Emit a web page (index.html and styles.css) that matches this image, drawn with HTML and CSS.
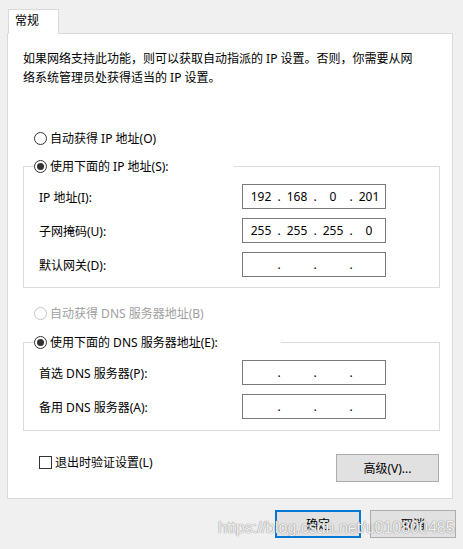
FILE: index.html
```html
<!DOCTYPE html>
<html lang="zh-CN">
<head>
<meta charset="utf-8">
<title>Internet 协议版本 4 (TCP/IPv4) 属性</title>
<link rel="stylesheet" href="styles.css">
</head>
<body>
<div class="dialog">
  <div class="tabs">
    <div class="tab">常规</div>
  </div>
  <div class="panel">
    <p class="desc">如果网络支持此功能，则可以获取自动指派的 IP 设置。否则，你需要从网<br>络系统管理员处获得适当的 IP 设置。</p>

    <div class="radio radio-first"><span class="circle"></span><span>自动获得 IP 地址(O)</span></div>

    <fieldset class="group group-ip">
      <legend class="legend legend-ip"><span class="radio"><span class="circle checked"></span><span>使用下面的 IP 地址(S):</span></span></legend>
      <div class="rows">
        <div class="row">
          <span class="label">IP 地址(I):</span>
          <div class="ipfield"><span class="seg">192</span><span class="dot">.</span><span class="seg">168</span><span class="dot">.</span><span class="seg">0</span><span class="dot">.</span><span class="seg">201</span></div>
        </div>
        <div class="row">
          <span class="label">子网掩码(U):</span>
          <div class="ipfield"><span class="seg">255</span><span class="dot">.</span><span class="seg">255</span><span class="dot">.</span><span class="seg">255</span><span class="dot">.</span><span class="seg">0</span></div>
        </div>
        <div class="row">
          <span class="label">默认网关(D):</span>
          <div class="ipfield"><span class="seg"></span><span class="dot">.</span><span class="seg"></span><span class="dot">.</span><span class="seg"></span><span class="dot">.</span><span class="seg"></span></div>
        </div>
      </div>
    </fieldset>

    <div class="radio radio-dns disabled"><span class="circle"></span><span>自动获得 DNS 服务器地址(B)</span></div>

    <fieldset class="group group-dns">
      <legend class="legend legend-dns"><span class="radio"><span class="circle checked"></span><span>使用下面的 DNS 服务器地址(E):</span></span></legend>
      <div class="rows rows-dns">
        <div class="row">
          <span class="label">首选 DNS 服务器(P):</span>
          <div class="ipfield"><span class="seg"></span><span class="dot">.</span><span class="seg"></span><span class="dot">.</span><span class="seg"></span><span class="dot">.</span><span class="seg"></span></div>
        </div>
        <div class="row">
          <span class="label">备用 DNS 服务器(A):</span>
          <div class="ipfield"><span class="seg"></span><span class="dot">.</span><span class="seg"></span><span class="dot">.</span><span class="seg"></span><span class="dot">.</span><span class="seg"></span></div>
        </div>
      </div>
    </fieldset>

    <div class="bottom">
      <div class="check"><span class="box"></span><span>退出时验证设置(L)</span></div>
      <button class="btn btn-adv">高级(V)...</button>
    </div>
  </div>
  <div class="footer">
    <button class="btn btn-main btn-default">确定</button>
    <button class="btn btn-main">取消</button>
  </div>
  <div class="watermark">https://blog.csdn.net/u010800485</div>
</div>
</body>
</html>
```

FILE: styles.css
```css
* { box-sizing: border-box; }

html, body {
  margin: 0;
  padding: 0;
  background: #f0f0f0;
}

body {
  width: 463px;
  height: 549px;
  overflow: hidden;
  font-family: "Noto Sans", "Noto Sans CJK SC", sans-serif;
  font-size: 12px;
  color: #000;
}

.dialog {
  position: relative;
  width: 463px;
  height: 549px;
  padding-top: 9px;
}

.tabs {
  display: flex;
  padding-left: 8px;
}

.tab {
  position: relative;
  z-index: 1;
  width: 51px;
  height: 25px;
  margin-bottom: -1px;
  padding-left: 6px;
  line-height: 22px;
  background: #fff;
  border: 1px solid #d9d9d9;
  border-bottom: none;
}

.panel {
  margin: 0 10px 0 7px;
  background: #fff;
  border: 1px solid #d9d9d9;
  padding: 15px 13px 16px 15px;
}

.desc {
  margin: 0;
  line-height: 19px;
}

.radio {
  display: flex;
  align-items: center;
  height: 18px;
  white-space: nowrap;
}

.radio-first {
  margin: 42px 0 0 11px;
}

.radio-dns {
  margin: 16px 0 0 11px;
}

.circle {
  flex: none;
  width: 13px;
  height: 13px;
  margin-right: 3px;
  border: 1px solid #333;
  border-radius: 50%;
  background: #fff;
  display: flex;
  align-items: center;
  justify-content: center;
}

.circle.checked::after {
  content: "";
  width: 7px;
  height: 7px;
  border-radius: 50%;
  background: #333;
}

.disabled {
  color: #a0a0a0;
}

.disabled .circle {
  border-color: #c4c4c4;
}

.group {
  width: 417px;
  margin: 10px 0 0 0;
  padding: 0;
  border: 1px solid #dcdcdc;
  min-width: 0;
}

.group-dns {
  margin-top: 11px;
}

.legend {
  padding: 0;
  margin-left: 10px;
  height: 18px;
  background: #fff;
}

.legend-ip { width: 200px; }
.legend-dns { width: 247px; }

.rows {
  display: flex;
  flex-direction: column;
  gap: 9px;
  padding: 9px 0 10px 15px;
}

.rows-dns {
  padding-bottom: 11px;
}

.row {
  display: flex;
  align-items: center;
  height: 25px;
}

.label {
  width: 203px;
  white-space: nowrap;
}

.ipfield {
  display: flex;
  align-items: center;
  width: 144px;
  height: 25px;
  border: 1px solid #7a7a7a;
  background: #fff;
  padding: 0 0 0 2px;
}

.seg {
  flex: 1;
  text-align: center;
}

.dot {
  width: 4px;
  text-align: center;
}

.bottom {
  display: flex;
  justify-content: space-between;
  align-items: flex-start;
  margin-top: 23px;
}

.check {
  display: flex;
  align-items: center;
  height: 18px;
  margin: -1px 0 0 16px;
}

.box {
  width: 13px;
  height: 13px;
  margin-right: 3px;
  border: 1px solid #333;
  background: #fff;
}

.btn {
  font-family: "Noto Sans", "Noto Sans CJK SC", sans-serif;
  font-size: 12px;
  color: #000;
  background: #e1e1e1;
  border: 1px solid #adadad;
  padding: 0;
  margin: 0;
  height: 28px;
}

.btn-adv {
  width: 103px;
}

.footer {
  display: flex;
  justify-content: flex-end;
  gap: 9px;
  margin-top: 11px;
  padding-right: 7px;
}

.btn-main {
  width: 86px;
}

.btn-default {
  border: 2px solid #0078d7;
}

.watermark {
  position: absolute;
  left: 218px;
  top: 518px;
  font-family: "Liberation Sans", Arial, sans-serif;
  font-size: 16px;
  line-height: 20px;
  color: rgba(255, 255, 255, 0.9);
  text-shadow: 0 0 1px #8a8a8a, 0 0 1px #8a8a8a;
  white-space: nowrap;
  pointer-events: none;
}
```
